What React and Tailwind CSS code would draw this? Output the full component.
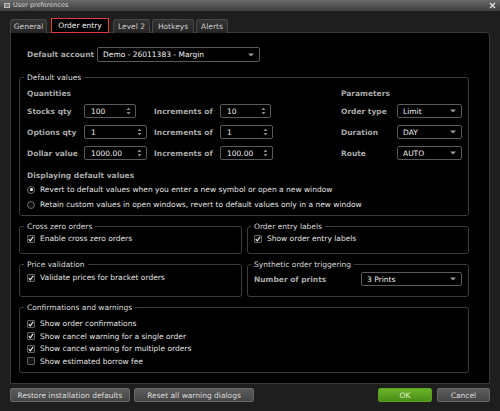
import React from 'react';

const Spin = () => (
  <svg width="5" height="8" viewBox="0 0 5 8" className="shrink-0">
    <path d="M2.5 0.5 L4.5 3 L0.5 3 Z" fill="#8a8a8a" />
    <path d="M0.5 5 L4.5 5 L2.5 7.5 Z" fill="#8a8a8a" />
  </svg>
);

const Caret = () => (
  <svg width="6" height="4" viewBox="0 0 6 4" className="shrink-0">
    <path d="M0 0.5 L6 0.5 L3 3.5 Z" fill="#9a9a9a" />
  </svg>
);

const NumInput = ({ value, w }) => (
  <div className={`${w} h-[14px] bg-black border border-[#5a5a5a] rounded-[2px] flex items-center justify-between pl-[6px] pr-[4px] text-[#f0f0f0]`}>
    <span>{value}</span>
    <Spin />
  </div>
);

const Select = ({ value, w, h = 'h-[14px]' }) => (
  <div className={`${w} ${h} bg-black border border-[#5a5a5a] rounded-[2px] flex items-center justify-between pl-[5px] pr-[5px] text-[#f0f0f0] whitespace-nowrap`}>
    <span>{value}</span>
    <Caret />
  </div>
);

const Check = ({ checked, label }) => (
  <div className="flex items-center h-[11px] gap-[5px] whitespace-nowrap">
    <div className="w-[8px] h-[8px] border border-[#5c5c5c] bg-[#151515] rounded-[1px] flex items-center justify-center shrink-0">
      {checked && (
        <svg width="6" height="6" viewBox="0 0 6 6">
          <path d="M0.8 3.2 L2.3 4.8 L5.2 0.8" stroke="#f2f2f2" strokeWidth="1.1" fill="none" />
        </svg>
      )}
    </div>
    <span className="text-[#e2e2e2]">{label}</span>
  </div>
);

const Radio = ({ checked, label }) => (
  <div className="flex items-center h-[11px] gap-[5px] whitespace-nowrap">
    <div className="w-[8px] h-[8px] rounded-full border border-[#6a6a6a] bg-[#111] flex items-center justify-center shrink-0">
      {checked && <div className="w-[3px] h-[3px] rounded-full bg-[#f0f0f0]" />}
    </div>
    <span className="text-[#e2e2e2]">{label}</span>
  </div>
);

const Group = ({ title, className = '', children }) => (
  <fieldset className={`border border-[#3c3c3c] rounded-[3px] ${className}`}>
    <legend className="-ml-[3px] px-[3px] leading-[9px] text-[#dcdcdc] whitespace-nowrap">{title}</legend>
    {children}
  </fieldset>
);

const Label = ({ children, className = '' }) => (
  <span className={`font-bold text-[#a9a9a9] whitespace-nowrap ${className}`}>{children}</span>
);

const Btn = ({ children, w, green }) => (
  <button
    className={`${w} h-[14px] rounded-[2px] border flex items-center justify-center whitespace-nowrap ${
      green
        ? 'bg-gradient-to-b from-[#6bb52a] to-[#4a8e16] border-[#5d9f22] text-[#e8f5dc]'
        : 'bg-gradient-to-b from-[#5c5c5c] to-[#464646] border-[#686868] text-[#dddddd]'
    }`}
  >
    {children}
  </button>
);

export default function App() {
  const tabs = [
    { name: 'General', w: 'w-[37px]' },
    { name: 'Order entry', w: 'w-[58px]', active: true },
    { name: 'Level 2', w: 'w-[37px]' },
    { name: 'Hotkeys', w: 'w-[42px]' },
    { name: 'Alerts', w: 'w-[32px]' },
  ];

  const qtyRows = [
    { label: 'Stocks qty', value: '100', w: 'w-[52px]', inc: '10', incW: 'w-[51px]' },
    { label: 'Options qty', value: '1', w: 'w-[63px]', inc: '1', incW: 'w-[53px]' },
    { label: 'Dollar value', value: '1000.00', w: 'w-[63px]', inc: '100.00', incW: 'w-[53px]' },
  ];

  const params = [
    { label: 'Order type', value: 'Limit' },
    { label: 'Duration', value: 'DAY' },
    { label: 'Route', value: 'AUTO' },
  ];

  return (
    <div className="w-[500px] h-[411px] bg-[#1e1e1e] flex flex-col text-[7.5px] leading-[9px] overflow-hidden" style={{ fontFamily: '"DejaVu Sans", Verdana, sans-serif' }}>
      {/* Title bar */}
      <div className="h-[11px] shrink-0 bg-gradient-to-b from-[#6a6a6a] to-[#3e3e3e] flex items-center pl-[4px] pr-[4px]">
        <div className="w-[6px] h-[5px] border border-[#bdbdbd] bg-[#7a7a7a] mr-[3px]" />
        <span className="text-[#d4d4d4] text-[6.5px]">User preferences</span>
        <svg width="7" height="7" viewBox="0 0 7 7" className="ml-auto">
          <path d="M1 1 L6 6 M6 1 L1 6" stroke="#e0e0e0" strokeWidth="1.4" />
        </svg>
      </div>

      <div className="flex-1 flex flex-col pl-[10px] pr-[10px]">
        {/* Tabs */}
        <div className="flex items-end gap-[2px] mt-[7px] h-[15px] relative z-10 -mb-px">
          {tabs.map((t) =>
            t.active ? (
              <div key={t.name} className={`${t.w} h-[15px] bg-black border border-[#e03a3a] flex items-center justify-center text-[#f0f0f0] mx-[2px] whitespace-nowrap`}>
                {t.name}
              </div>
            ) : (
              <div key={t.name} className={`${t.w} h-[14px] bg-gradient-to-b from-[#333] to-[#262626] border border-b-0 border-[#474747] rounded-t-[3px] flex items-center justify-center text-[#d0d0d0] whitespace-nowrap`}>
                {t.name}
              </div>
            )
          )}
        </div>

        {/* Content panel */}
        <div className="h-[352px] bg-black border border-[#3a3a3a] rounded-tr-[4px] flex flex-col pt-[14px] pl-[8px] pr-[20px]">
          <div className="flex items-center h-[15px] pl-[8px]">
            <Label className="w-[70px]">Default account</Label>
            <Select value="Demo - 26011383 - Margin" w="w-[163px]" h="h-[15px]" />
          </div>

          <Group title="Default values" className="mt-[11px] pl-[7px] pb-[5px] h-[143px]">
            <div className="flex mt-[7px]">
              <div className="flex flex-col">
                <Label className="h-[9px]">Quantities</Label>
                <div className="flex flex-col gap-[7px] mt-[6px]">
                  {qtyRows.map((r) => (
                    <div key={r.label} className="flex items-center h-[14px]">
                      <Label className="w-[57px]">{r.label}</Label>
                      <div className="w-[70px]">
                        <NumInput value={r.value} w={r.w} />
                      </div>
                      <Label className="w-[66px]">Increments of</Label>
                      <NumInput value={r.inc} w={r.incW} />
                    </div>
                  ))}
                </div>
              </div>
              <div className="flex flex-col ml-[68px]">
                <Label className="h-[9px]">Parameters</Label>
                <div className="flex flex-col gap-[7px] mt-[6px]">
                  {params.map((p) => (
                    <div key={p.label} className="flex items-center h-[14px]">
                      <Label className="w-[56px]">{p.label}</Label>
                      <Select value={p.value} w="w-[65px]" />
                    </div>
                  ))}
                </div>
              </div>
            </div>
            <Label className="block mt-[11px] h-[9px]">Displaying default values</Label>
            <div className="flex flex-col gap-[4px] mt-[4px]">
              <Radio checked label="Revert to default values when you enter a new symbol or open a new window" />
              <Radio label="Retain custom values in open windows, revert to default values only in a new window" />
            </div>
          </Group>

          <div className="grid grid-cols-[223px_222px] gap-x-[5px] mt-[6px]">
            <Group title="Cross zero orders" className="pl-[7px] h-[32px]">
              <div className="mt-[2px]"><Check checked label="Enable cross zero orders" /></div>
            </Group>
            <Group title="Order entry labels" className="pl-[6px] h-[32px]">
              <div className="mt-[2px]"><Check checked label="Show order entry labels" /></div>
            </Group>
            <Group title="Price validation" className="pl-[7px] h-[37px] mt-[6px]">
              <div className="mt-[3px]"><Check checked label="Validate prices for bracket orders" /></div>
            </Group>
            <Group title="Synthetic order triggering" className="pl-[6px] h-[37px] mt-[6px]">
              <div className="flex items-center mt-[3px]">
                <Label className="w-[107px]">Number of prints</Label>
                <Select value="3 Prints" w="w-[101px]" />
              </div>
            </Group>
          </div>

          <Group title="Confirmations and warnings" className="mt-[6px] pl-[7px] h-[70px]">
            <div className="flex flex-col gap-[1.5px] mt-[6px]">
              <Check checked label="Show order confirmations" />
              <Check checked label="Show cancel warning for a single order" />
              <Check checked label="Show cancel warning for multiple orders" />
              <Check label="Show estimated borrow fee" />
            </div>
          </Group>
        </div>

        {/* Footer buttons */}
        <div className="flex items-center mt-[4px] gap-[4px]">
          <Btn w="w-[120px]">Restore installation defaults</Btn>
          <Btn w="w-[120px]">Reset all warning dialogs</Btn>
          <div className="ml-auto flex gap-[5px]">
            <Btn w="w-[54px]" green>OK</Btn>
            <Btn w="w-[53px]">Cancel</Btn>
          </div>
        </div>
      </div>
    </div>
  );
}
